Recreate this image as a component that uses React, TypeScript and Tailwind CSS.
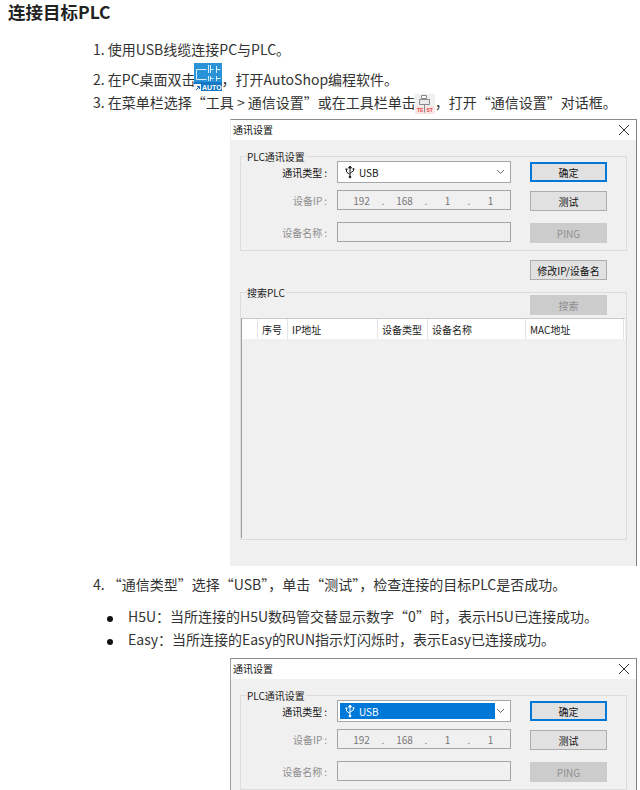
import React from 'react';

const COMMA = '\uFF0C';
const COLON = '\uFF1A';

const UsbIcon = ({ color }: { color: string }) => (
    <svg width="10" height="14" viewBox="0 0 10 14" fill="none" stroke={color} strokeWidth="1">
        <path d="M5 2v10" />
        <path d="M3.500 3 5 1l1.500 2z" fill={color} />
        <path d="M1.500 5v2L5 9.500" />
        <path d="M8.500 4.500v1.500L5 8" />
        <rect x="0.500" y="3.500" width="2" height="1.500" fill={color} stroke="none" />
        <circle cx="8.500" cy="4" r="1" fill={color} stroke="none" />
        <circle cx="5" cy="12" r="1.300" fill={color} stroke="none" />
    </svg>
);

const AutoIcon = () => (
    <svg width="28" height="28" viewBox="0 0 28 28" className="mb-[4px] ml-[-2px] shrink-0">
        <rect width="28" height="28" fill="#2a93d8" />
        <rect y="19" width="28" height="9" fill="#1478c4" />
        <g stroke="#d8eefb" strokeWidth="1" fill="none">
            <path d="M2.500 16.500v-10h10M14.500 2v8M16.500 2v8M16.500 6.500h3M22.500 3v7M22.500 6.500h4" />
            <path d="M2.500 16.500h10M14.500 13v5M16.500 13v5M16.500 15.500h3M22.500 13v5M22.500 15.500h4" />
        </g>
        <text x="8" y="27" fontSize="7" fontWeight="700" fill="#ffffff" fontFamily="Liberation Sans, sans-serif">AUTO</text>
        <rect y="21" width="7" height="7" fill="#f4f4f4" />
        <path d="M2 27l3-3M3 23.500h2.500V26" stroke="#1f5fa8" strokeWidth="1" fill="none" />
    </svg>
);

const TestIcon = () => (
    <svg width="20" height="20" viewBox="0 0 20 20" className="ml-[-1px] mt-[4px] shrink-0">
        <rect width="20" height="20" fill="#f0f0f0" />
        <rect y="12" width="20" height="8" fill="#fbe6e6" />
        <path d="M6.500 1.500h5v3h-5z" fill="#fff" stroke="#8a8a8a" />
        <path d="M4.500 5.500h10v5h-10z" fill="#ececec" stroke="#8a8a8a" />
        <path d="M9.500 10.500v8" stroke="#8a8a8a" />
        <text x="2" y="18" fontSize="5" fill="#e54848" fontFamily="Liberation Sans, sans-serif" fontWeight="700">TE</text>
        <text x="11.500" y="18" fontSize="5" fill="#e54848" fontFamily="Liberation Sans, sans-serif" fontWeight="700">ST</text>
    </svg>
);

const DlgButton = ({ label, variant }: { label: string; variant?: 'primary' | 'disabled' }) => {
    const cls =
        variant === 'primary'
            ? 'border-2 border-[#0078d7] bg-[#e1e1e1] text-[#111]'
            : variant === 'disabled'
                ? 'border border-[#cccccc] bg-[#cccccc] text-[#8f8f8f]'
                : 'border border-[#adadad] bg-[#e1e1e1] text-[#111]';
    return <div className={`flex h-[20px] w-[77px] items-center justify-center text-[10px] ${cls}`}>{label}</div>;
};

const FormRow = ({ label, dim, children, className }: { label: string; dim?: boolean; children: React.ReactNode; className?: string }) => (
    <div className={`flex items-center ${className ?? ''}`}>
        <span className={`w-[86px] text-right text-[10px] ${dim ? 'text-[#8f8f8f]' : 'text-[#111]'}`}>
            {label}<span className="ml-[2px]">:</span>
        </span>
        <div className="ml-[10px] w-[174px]">{children}</div>
    </div>
);

const columns = [
    { label: '', w: 'w-[16px]' },
    { label: '序号', w: 'w-[30px]' },
    { label: 'IP地址', w: 'w-[90px]' },
    { label: '设备类型', w: 'w-[50px]' },
    { label: '设备名称', w: 'w-[98px]' },
    { label: 'MAC地址', w: 'w-[98px]' },
];

const ipParts = ['192', '168', '1', '1'];

const Dialog = ({ selected, leftBorder }: { selected?: boolean; leftBorder?: boolean }) => (
    <div className={`ml-[230px] h-[447px] w-[407px] border border-b-0 border-t-[#8c8c8c] border-r-[#808080] bg-[#f0f0f0] ${leftBorder ? 'border-l-[#a0a0a0]' : 'border-l-[#f0f0f0]'}`}>
        <div className="flex h-[20px] items-center justify-between bg-white pl-[2px] pr-[6px] text-[10px] text-[#111]">
            <span className="mb-[2px]">通讯设置</span>
            <svg width="12" height="12" viewBox="0 0 12 12" stroke="#333" strokeWidth="1"><path d="M1 1l10 10M11 1 1 11" /></svg>
        </div>
        <div className="px-[9px] pt-[16px]">
            <div className="relative h-[95px] border border-[#dcdcdc]">
                <span className="absolute left-[6px] top-[-6px] bg-[#f0f0f0] pr-[1px] text-[10px] leading-[12px] text-[#222]">PLC通讯设置</span>
                <div className="flex pt-[4px]">
                    <div className="flex w-[289px] flex-col">
                        <FormRow label="通讯类型">
                            <div className="flex h-[22px] items-center justify-between border border-[#a6a6a6] bg-white p-[2px] pr-[5px]">
                                <div className={`flex h-full items-center gap-[4px] pl-[5px] text-[10px] ${selected ? 'w-[155px] bg-[#0078d7] text-white' : 'text-[#111]'}`}>
                                    <UsbIcon color={selected ? '#ffffff' : '#222222'} />
                                    <span>USB</span>
                                </div>
                                <svg width="9" height="6" viewBox="0 0 9 6" fill="none" stroke="#666"><path d="M1 1l3.500 3.500L8 1" /></svg>
                            </div>
                        </FormRow>
                        <FormRow label="设备IP" dim className="mt-[7px]">
                            <div className="flex h-[20px] items-center border border-[#a6a6a6] bg-[#f0f0f0] pl-[5px] text-[10px] text-[#777]">
                                {ipParts.map((part, i) => (
                                    <React.Fragment key={i}>
                                        <span className="w-[37px] text-center">{part}</span>
                                        {i < 3 && <span className="w-[6px] text-center">.</span>}
                                    </React.Fragment>
                                ))}
                            </div>
                        </FormRow>
                        <FormRow label="设备名称" dim className="mt-[12px]">
                            <div className="h-[20px] border border-[#a6a6a6] bg-[#f0f0f0]" />
                        </FormRow>
                    </div>
                    <div className="flex flex-col pt-[1px]">
                        <DlgButton label="确定" variant="primary" />
                        <div className="mt-[9px]"><DlgButton label="测试" /></div>
                        <div className="mt-[12px]"><DlgButton label="PING" variant="disabled" /></div>
                    </div>
                </div>
            </div>
            <div className="ml-[290px] mt-[9px]"><DlgButton label="修改IP/设备名" /></div>
            <div className="relative mt-[12px] h-[248px] border border-[#dcdcdc]">
                <span className="absolute left-[6px] top-[-6px] bg-[#f0f0f0] pr-[1px] text-[10px] leading-[12px] text-[#222]">搜索PLC</span>
                <div className="ml-[289px] pt-[2px]"><DlgButton label="搜索" variant="disabled" /></div>
                <div className="mr-[1px] mt-[3px] h-[220px] border-l border-t border-l-[#a0a0a0] border-t-[#c8c8c8]">
                    <div className="flex h-[20px] bg-white">
                        {columns.map((c, i) => (
                            <div key={i} className={`flex items-center border-r border-[#e5e5e5] pl-[4px] text-[10px] text-[#222] ${c.w}`}>{c.label}</div>
                        ))}
                    </div>
                </div>
            </div>
        </div>
    </div>
);

const App = () => {
    return (
        <div className="h-[790px] w-[640px] overflow-hidden bg-white font-['Noto_Sans_CJK_SC',sans-serif] text-[14px] text-[#333]">
            <h2 className="pl-[8px] text-[17.500px] font-bold leading-[24px] text-[#222]">连接目标PLC</h2>
            <ol className="ml-[93px] mt-[13px]">
                <li className="flex h-[24px] items-center">1. 使用USB线缆连接PC与PLC。</li>
                <li className="mt-[4px] flex h-[28px] items-center">
                    2. 在PC桌面双击<AutoIcon />{COMMA}打开AutoShop编程软件。
                </li>
                <li className="mt-[-3px] flex h-[24px] items-center">
                    3. 在菜单栏选择“工具 &gt; 通信设置”或在工具栏单击<TestIcon />{COMMA}打开“通信设置”对话框。
                </li>
            </ol>
            <div className="mt-[5px]"><Dialog /></div>
            <p className="ml-[93px] mt-[6px] h-[24px] leading-[24px]">4. “通信类型”选择“USB”{COMMA}单击“测试”{COMMA}检查连接的目标PLC是否成功。</p>
            <ul className="ml-[107px] mt-[9px]">
                <li className="flex h-[23px] items-center">
                    <span className="mr-[15px] mt-[4px] h-[6px] w-[6px] rounded-full bg-[#111]" />
                    H5U{COLON}当所连接的H5U数码管交替显示数字“0”时{COMMA}表示H5U已连接成功。
                </li>
                <li className="flex h-[23px] items-center">
                    <span className="mr-[15px] mt-[4px] h-[6px] w-[6px] rounded-full bg-[#111]" />
                    Easy{COLON}当所连接的Easy的RUN指示灯闪烁时{COMMA}表示Easy已连接成功。
                </li>
            </ul>
            <div className="mt-[7px]"><Dialog selected leftBorder /></div>
        </div>
    );
};

export default App;
